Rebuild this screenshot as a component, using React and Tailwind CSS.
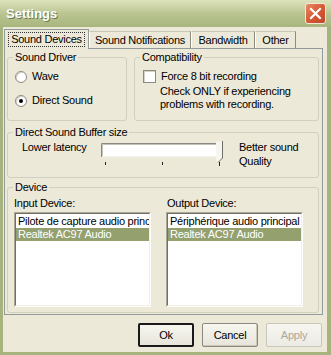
import React from "react";

function Group({ title, className = "", children }) {
  return (
    <div className={`relative border border-[#d0d0bf] rounded-[3px] ${className}`}>
      <span className="absolute top-[-7px] left-[5px] px-[2px] bg-[#ece9d8] leading-[13px] whitespace-nowrap">
        {title}
      </span>
      {children}
    </div>
  );
}

function Radio({ checked }) {
  return (
    <span className="w-[12px] h-[12px] rounded-full border border-[#8d8b80] bg-white shadow-[inset_1px_1px_0_#d6d3c6] flex items-center justify-center shrink-0">
      {checked && <span className="w-[4px] h-[4px] rounded-full bg-black" />}
    </span>
  );
}

function ListBox({ items }) {
  return (
    <div className="w-[137px] h-[95px] border border-t-[#aca899] border-l-[#aca899] border-r-white border-b-white">
      <div className="w-full h-full border border-t-[#716f64] border-l-[#716f64] border-r-[#f1efe2] border-b-[#f1efe2] bg-white pt-[1px] overflow-hidden">
        {items.map((it, i) => (
          <div
            key={i}
            className={`h-[13px] leading-[13px] pl-[2px] whitespace-nowrap overflow-hidden ${
              it.sel ? "bg-[#94a16f] text-white" : ""
            }`}
          >
            {it.t}
          </div>
        ))}
      </div>
    </div>
  );
}

function Button({ children, variant }) {
  const base =
    "w-[56px] h-[24px] rounded-[2px] flex items-center justify-center bg-gradient-to-b from-[#f7f6f0] to-[#e7e5da]";
  if (variant === "default")
    return <div className={`${base} border-2 border-[#1a1a1a]`}>{children}</div>;
  if (variant === "disabled")
    return (
      <div className={`${base} border border-[#c9c7ba] text-[#aca899] from-[#f3f2ec] to-[#ecebe4]`}>
        {children}
      </div>
    );
  return (
    <div className={`${base} border border-[#8a897f] shadow-[inset_-1px_-1px_0_#c9c6b8]`}>{children}</div>
  );
}

export default function App() {
  return (
    <div className="w-[331px] h-[355px] flex flex-col bg-[#a6b37c] font-['Liberation_Sans',Arial,sans-serif] text-[11px] tracking-[-0.25px] text-black overflow-hidden">
      {/* Title bar */}
      <div className="h-[27px] shrink-0 flex items-center justify-between pl-[6px] pr-[5px] bg-gradient-to-b from-[#dde3bd] via-[#bac592] to-[#a8b67e]">
        <span className="text-white font-bold text-[13px] leading-[16px] tracking-normal [text-shadow:1px_1px_0_#6f7a52]">
          Settings
        </span>
        <div className="w-[21px] h-[21px] rounded-[3px] border border-[#f3e7d8] bg-gradient-to-br from-[#e98a68] via-[#d65a36] to-[#c0462a] flex items-center justify-center">
          <svg width="13" height="13" viewBox="0 0 13 13">
            <path d="M2 2 L11 11 M11 2 L2 11" stroke="white" strokeWidth="2.2" strokeLinecap="square" />
          </svg>
        </div>
      </div>

      {/* Body */}
      <div className="flex-1 ml-[3px] mr-[4px] mb-[3px] bg-[#ece9d8] flex flex-col pt-[2px] pl-[1px] pr-[4px]">
        {/* Tabs */}
        <div className="flex items-end h-[19px] relative z-10">
          <div className="h-[20px] w-[85px] border border-b-0 border-[#919b9c] bg-[#ece9d8] flex items-center justify-center -mb-px">
            <span className="border border-dotted border-[#333] px-[2px] leading-[13px]">Sound Devices</span>
          </div>
          <div className="h-[17px] w-[102px] border border-b-0 border-l-white border-t-[#c8c6b8] border-r-[#8e8c80] flex items-center justify-center">
            Sound Notifications
          </div>
          <div className="h-[17px] w-[64px] border border-b-0 border-l-white border-t-[#c8c6b8] border-r-[#8e8c80] flex items-center justify-center">
            Bandwidth
          </div>
          <div className="h-[17px] w-[41px] border border-b-0 border-l-white border-t-[#c8c6b8] border-r-[#8e8c80] flex items-center justify-center">
            Other
          </div>
        </div>

        {/* Panel */}
        <div className="h-[267px] border border-[#919b9c] flex flex-col pt-[8px] pl-[2px] pr-[3px]">
          {/* Row 1 */}
          <div className="flex gap-[7px] h-[64px] shrink-0">
            <Group title="Sound Driver" className="w-[120px] h-[64px]">
              <div className="flex flex-col pt-[12px] pl-[7px] gap-[11px]">
                <div className="flex items-center h-[13px] gap-[5px]">
                  <Radio />
                  <span>Wave</span>
                </div>
                <div className="flex items-center h-[13px] gap-[5px]">
                  <Radio checked />
                  <span>Direct Sound</span>
                </div>
              </div>
            </Group>
            <Group title="Compatibility" className="w-[185px] h-[64px]">
              <div className="flex flex-col pt-[12px] pl-[8px]">
                <div className="flex items-center h-[13px] gap-[5px]">
                  <span className="w-[13px] h-[13px] border border-[#8d8b80] bg-white shadow-[inset_1px_1px_0_#d6d3c6] shrink-0" />
                  <span>Force 8 bit recording</span>
                </div>
                <div className="mt-[2px] ml-[17px] leading-[13px]">
                  Check ONLY if experiencing
                  <br />
                  problems with recording.
                </div>
              </div>
            </Group>
          </div>

          {/* Row 2 */}
          <Group title="Direct Sound Buffer size" className="mt-[11px] h-[46px] shrink-0">
            <div className="flex pt-[7px] pl-[14px]">
              <div className="w-[79px] leading-[14px]">Lower latency</div>
              <svg width="125" height="26" viewBox="0 0 125 26" className="shrink-0 mt-[1px]">
                <rect x="0" y="2" width="122" height="14" fill="#ffffff" />
                <path d="M0.5 16 V2.5 H121" stroke="#8a8a82" strokeWidth="1" fill="none" />
                <path d="M1.5 15 V3.5 H120" stroke="#c4c2b6" strokeWidth="1" fill="none" />
                <path d="M1 15.5 H116" stroke="#f4f3ee" strokeWidth="1" />
                <path d="M115 0.5 H121.5 V17 L117 21.5 L115 19" fill="#f6f5f0" stroke="none" />
                <path d="M121.5 0 V17 L117 21.5" stroke="#6d6d66" strokeWidth="1" fill="none" />
                <path d="M4.5 21 V24" stroke="#222" strokeWidth="1" />
                <path d="M61.5 21 V24" stroke="#222" strokeWidth="1" />
                <path d="M118.5 21 V25" stroke="#222" strokeWidth="1" />
              </svg>
              <div className="ml-[13px] leading-[14px]">
                Better sound
                <br />
                Quality
              </div>
            </div>
          </Group>

          {/* Row 3 */}
          <Group title="Device" className="mt-[9px] h-[126px] shrink-0">
            <div className="flex pt-[9px] pl-[6px] gap-[15px]">
              <div className="flex flex-col">
                <div className="leading-[13px] h-[13px]">Input Device:</div>
                <div className="mt-[2px]">
                  <ListBox
                    items={[
                      { t: "Pilote de capture audio principal" },
                      { t: "Realtek AC97 Audio", sel: true },
                    ]}
                  />
                </div>
              </div>
              <div className="flex flex-col">
                <div className="leading-[13px] h-[13px] pl-[1px]">Output Device:</div>
                <div className="mt-[2px]">
                  <ListBox
                    items={[
                      { t: "Périphérique audio principal" },
                      { t: "Realtek AC97 Audio", sel: true },
                    ]}
                  />
                </div>
              </div>
            </div>
          </Group>
        </div>

        {/* Buttons */}
        <div className="flex justify-end gap-[8px] mt-[8px] pr-[1px]">
          <Button variant="default">Ok</Button>
          <Button>Cancel</Button>
          <Button variant="disabled">Apply</Button>
        </div>
      </div>
    </div>
  );
}
